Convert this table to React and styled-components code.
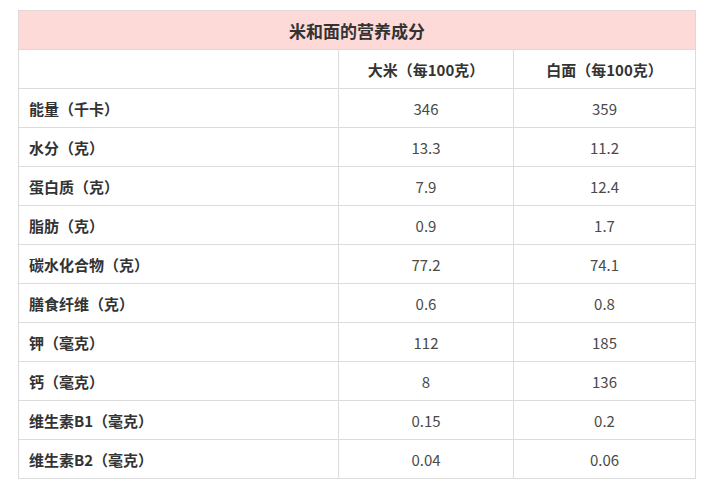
import React from 'react';
import styled, {createGlobalStyle} from 'styled-components';

const Global = createGlobalStyle`
  body {
    margin: 0;
    background: #fff;
    font-family: "Noto Sans CJK SC", "Noto Sans", sans-serif;
    text-spacing-trim: space-all;
  }
`

const Page = styled.div`
  padding: 10px 17px 0 18px;
`

const Table = styled.table`
  width: 677px;
  border-collapse: collapse;
  table-layout: fixed;
  border: 1px solid #d9d9d9;
`

const Title = styled.th`
  height: 38px;
  background: #fdd9d8;
  color: #333;
  font-size: 17px;
  font-weight: bold;
  text-align: center;
  border: 1px solid #e4d6d6;
  padding: 0;
`

const Cell = styled.td`
  height: 38px;
  padding: 0 0 0 ${props => props.label ? '10px' : '0'};
  border: 1px solid #dcdcdc;
  font-size: 15px;
  color: ${props => props.bold ? '#333' : '#4a4a4a'};
  font-weight: ${props => props.bold ? 'bold' : 'normal'};
  text-align: ${props => props.label ? 'left' : 'center'};
  white-space: nowrap;
  text-spacing-trim: space-all;
`

const rows = [
    ['能量（千卡）', '346', '359'],
    ['水分（克）', '13.3', '11.2'],
    ['蛋白质（克）', '7.9', '12.4'],
    ['脂肪（克）', '0.9', '1.7'],
    ['碳水化合物（克）', '77.2', '74.1'],
    ['膳食纤维（克）', '0.6', '0.8'],
    ['钾（毫克）', '112', '185'],
    ['钙（毫克）', '8', '136'],
    ['维生素B1（毫克）', '0.15', '0.2'],
    ['维生素B2（毫克）', '0.04', '0.06'],
]

const App = () => {
    return (
        <Page>
            <Global/>
            <Table>
                <colgroup>
                    <col style={{width: 320}}/>
                    <col style={{width: 175}}/>
                    <col style={{width: 182}}/>
                </colgroup>
                <thead>
                    <tr>
                        <Title colSpan={3}>米和面的营养成分</Title>
                    </tr>
                </thead>
                <tbody>
                    <tr>
                        <Cell bold label/>
                        <Cell bold>大米（每100克）</Cell>
                        <Cell bold>白面（每100克）</Cell>
                    </tr>
                    {
                        rows.map(row => <tr key={row[0]}>
                            <Cell bold label>{row[0]}</Cell>
                            <Cell>{row[1]}</Cell>
                            <Cell>{row[2]}</Cell>
                        </tr>)
                    }
                </tbody>
            </Table>
        </Page>
    );
}

export default App;
